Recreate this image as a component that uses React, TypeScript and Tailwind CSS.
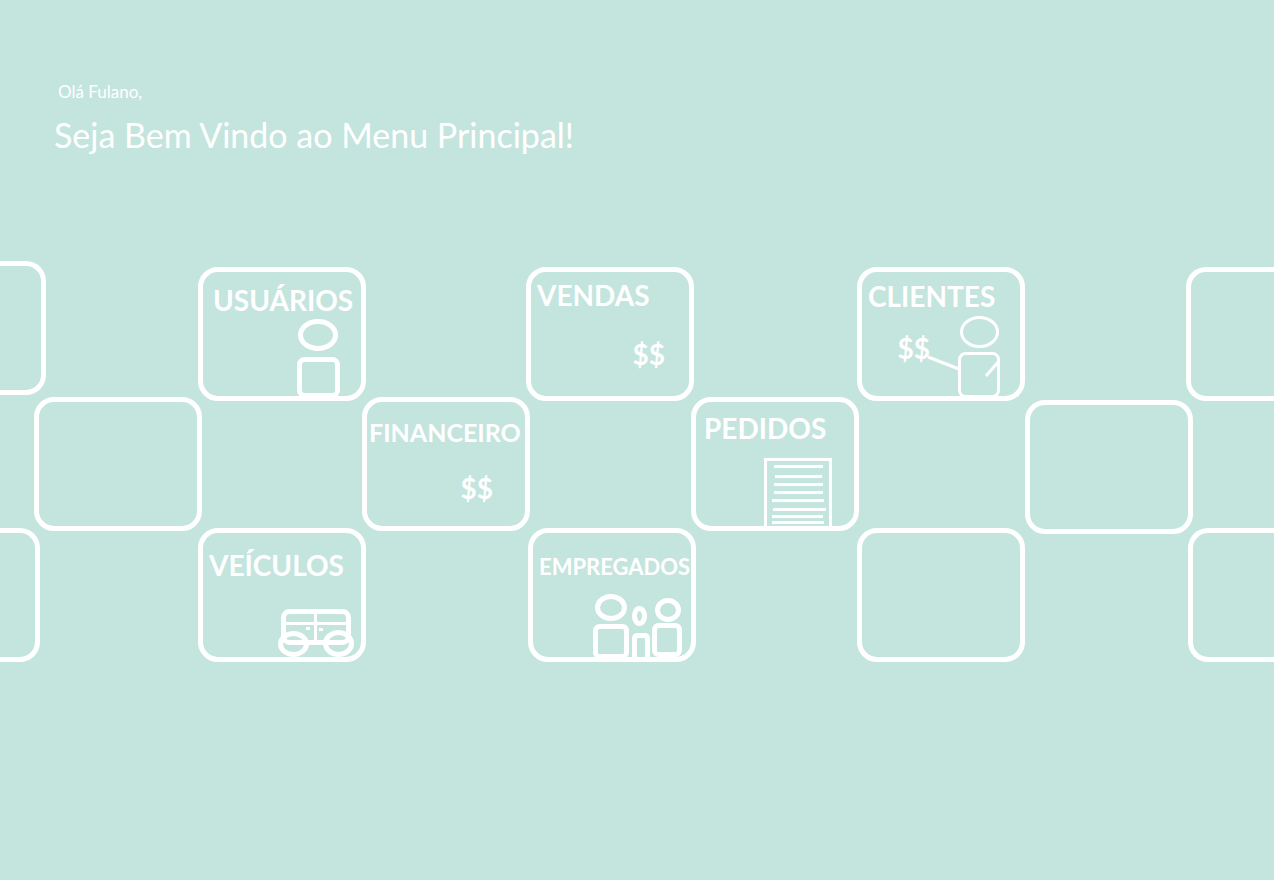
import type { ReactNode } from "react";

const tile = "h-[134px] border-5 border-white rounded-[20px]";
const tileFromLeft = "h-[134px] border-5 border-l-0 border-white rounded-r-[20px]";
const tileFromRight = "h-[134px] border-5 border-r-0 border-white rounded-l-[20px]";

type MenuTileProps = {
  label: string;
  className: string;
  labelClass: string;
  children: ReactNode;
};

function MenuTile({ label, className, labelClass, children }: MenuTileProps) {
  return (
    <button
      type="button"
      className={`${tile} flex flex-col items-start justify-between text-left font-bold cursor-pointer ${className}`}
    >
      <span className={`whitespace-nowrap leading-8 ${labelClass}`}>{label}</span>
      {children}
    </button>
  );
}

function UserIcon() {
  return (
    <svg aria-hidden="true" className="self-end mr-[19px] shrink-0 overflow-visible" width="46" height="79" viewBox="0 0 46 79" fill="none" stroke="white" strokeWidth="5">
      <ellipse cx="22" cy="18" rx="17.5" ry="13.5" />
      <rect x="3.5" y="42.5" width="38" height="36" rx="5" />
    </svg>
  );
}

function ClientIcon() {
  return (
    <svg aria-hidden="true" className="shrink-0 overflow-visible" width="72" height="80" viewBox="0 0 72 80" fill="none" stroke="white" strokeWidth="3">
      <ellipse cx="51.5" cy="16" rx="18" ry="14.5" />
      <rect x="31.5" y="37.5" width="39" height="43" rx="6" />
      <path d="M0 41 31 53M71 45 58 60" />
    </svg>
  );
}

function OrderIcon() {
  return (
    <svg aria-hidden="true" className="self-end mr-[22px] shrink-0 overflow-visible" width="68" height="68" viewBox="0 0 68 68" fill="none" stroke="white" strokeWidth="3">
      <path d="M1.5 68V1.5H66.5V68" />
      <path d="M10 8.5H59M11 18.5H58M10 26.5H59M10 34.5H59M8 42.5H60M9 51.5H62M8 58.5H59M8 64.5H60" />
    </svg>
  );
}

function VehicleIcon() {
  return (
    <svg aria-hidden="true" className="self-end mr-[7px] shrink-0 overflow-visible" width="76" height="48" viewBox="0 0 76 48" fill="none" stroke="white" strokeWidth="5">
      <rect x="5.5" y="2.5" width="65" height="31" rx="6" />
      <path d="M5 14.5H71M37.5 2V33" strokeWidth="3" />
      <ellipse cx="15.5" cy="35" rx="13" ry="10.5" />
      <ellipse cx="60.5" cy="34.5" rx="13" ry="11" />
      <path d="M28 19.5H32M41 20.5H45" strokeWidth="3" />
    </svg>
  );
}

function EmployeesIcon() {
  return (
    <svg aria-hidden="true" className="self-end mr-[9px] shrink-0 overflow-visible" width="89" height="63" viewBox="0 0 89 63" fill="none" stroke="white" strokeWidth="5">
      <ellipse cx="18" cy="13.5" rx="13.5" ry="11" />
      <rect x="2.5" y="32.5" width="31" height="30" rx="4" />
      <ellipse cx="46.5" cy="22" rx="5" ry="7.5" />
      <path d="M41.5 63V44.5Q41.5 41.5 44.5 41.5H51.5Q54.5 41.5 54.5 44.5V63" />
      <ellipse cx="75" cy="16" rx="10.5" ry="9.5" />
      <rect x="61.5" y="31.5" width="25" height="29" rx="4" />
    </svg>
  );
}

export default function App() {
  return (
    <main className="min-h-screen overflow-x-hidden bg-[#c4e5dd] pt-20 pb-20 text-white font-[Lato,sans-serif]">
      <header className="px-[54px]">
        <p className="pl-1 text-[17px] leading-6">Olá Fulano,</p>
        <h1 className="mt-[7px] text-[34px] leading-12">Seja Bem Vindo ao Menu Principal!</h1>
      </header>

      <nav aria-label="Menu Principal" className="mt-[102px]">
        <div className="grid h-[140px] items-end grid-cols-[46fr_152fr_168fr_160fr_168fr_163fr_168fr_161fr_88fr]">
          <div className={`${tileFromLeft} self-start`} />
          <MenuTile label="USUÁRIOS" className="col-start-3 pt-3" labelClass="pl-2.5 text-[28px]">
            <UserIcon />
          </MenuTile>
          <MenuTile label="VENDAS" className="col-start-5 pt-[7px]" labelClass="pl-1.5 text-[28px]">
            <span className="self-end mr-6 mb-[26px] text-[28px] leading-8">$$</span>
          </MenuTile>
          <MenuTile label="CLIENTES" className="col-start-7 pt-2" labelClass="pl-1.5 text-[28px]">
            <span className="-mt-4 mr-5 flex items-start self-end">
              <span className="-mr-0.5 pt-4 text-[28px] leading-8">$$</span>
              <ClientIcon />
            </span>
          </MenuTile>
          <div className={`${tileFromRight} col-start-9`} />
        </div>

        <div className="-mt-1 grid h-[137px] items-start grid-cols-[34fr_168fr_160fr_168fr_161fr_168fr_166fr_168fr_81fr]">
          <div className={`${tile} col-start-2`} />
          <MenuTile label="FINANCEIRO" className="col-start-4 pt-3.5" labelClass="pl-0.5 text-[25px]">
            <span className="self-end mr-8 mb-[22px] text-[28px] leading-8">$$</span>
          </MenuTile>
          <MenuTile label="PEDIDOS" className="col-start-6 pt-2.5" labelClass="pl-2 text-[28px]">
            <OrderIcon />
          </MenuTile>
          <div className={`${tile} col-start-8 self-end`} />
        </div>

        <div className="-mt-1.5 grid items-start grid-cols-[40fr_158fr_168fr_162fr_168fr_161fr_168fr_163fr_86fr]">
          <div className={tileFromLeft} />
          <MenuTile label="VEÍCULOS" className="col-start-3 pt-4" labelClass="pl-1.5 text-[28px]">
            <VehicleIcon />
          </MenuTile>
          <MenuTile label="EMPREGADOS" className="col-start-5 pt-[18px]" labelClass="pl-1.5 text-[22px]">
            <EmployeesIcon />
          </MenuTile>
          <div className={`${tile} col-start-7`} />
          <div className={`${tileFromRight} col-start-9`} />
        </div>
      </nav>
    </main>
  );
}
